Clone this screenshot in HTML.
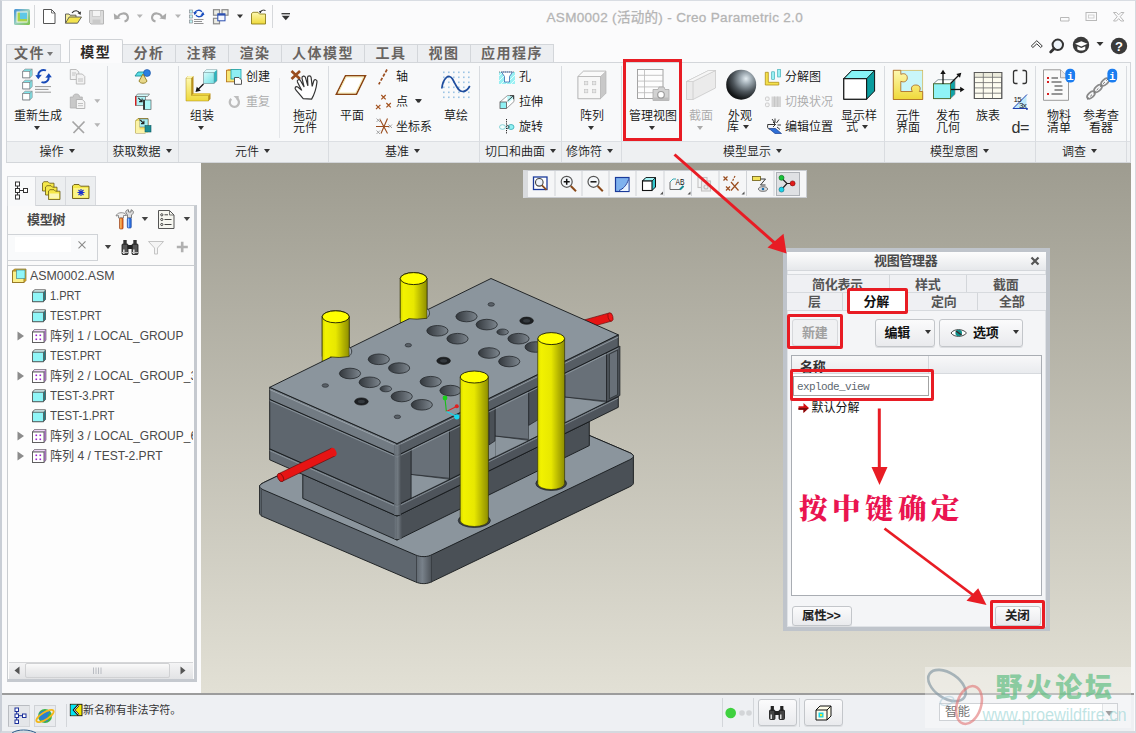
<!DOCTYPE html>
<html lang="zh-CN">
<head>
<meta charset="utf-8">
<title>ASM0002 (活动的) - Creo Parametric 2.0</title>
<style>
*{box-sizing:border-box;margin:0;padding:0}
html,body{width:1136px;height:733px;overflow:hidden;background:#fbfbfc}
body{position:relative;font-family:"Liberation Sans","Noto Sans CJK SC",sans-serif;font-size:12px;color:#222}
.abs{position:absolute}
#win{position:absolute;left:0;top:0;width:1136px;height:733px;background:#fbfbfc;border-left:2px solid #c9ced6;border-right:1.5px solid #d5d9df;border-bottom:2px solid #d5d9df;border-top:1px solid #d9dde3}
/* title */
#title{position:absolute;left:546.5px;top:6px;font-size:13.5px;color:#b2b2b2;white-space:nowrap;letter-spacing:0.32px;-webkit-text-stroke:.3px #b8b8b8}
/* tabs */
.tab{position:absolute;top:43.5px;height:19px;border:1px solid #d3d6da;border-bottom:none;background:#eceef1;color:#686461;font-weight:bold;font-size:14px;line-height:17px;text-align:center;letter-spacing:1.5px;white-space:nowrap}
.tab.act{top:39px;height:24px;background:#fbfbfc;color:#2e2a27;line-height:25px;z-index:3;border-color:#cfd2d6;border-radius:2px 2px 0 0}
#ribbon{position:absolute;left:6px;top:62px;width:1125px;height:101px;background:#f8f9fa;border:1px solid #d3d6da}
#rlabels{position:absolute;left:7px;top:140.5px;width:1123px;height:21.5px;background:#eef0f2;border-top:1px solid #dcdfe3}
.gsep{position:absolute;top:66px;width:1px;height:96px;background:#d9dce0}
.glab{position:absolute;top:144px;font-size:12px;color:#1a1a1a;white-space:nowrap;line-height:16px;font-weight:350}
.glab:after{content:"";display:inline-block;margin-left:5px;vertical-align:3px;border:3.5px solid transparent;border-top:4px solid #333;border-bottom:none}
.rl{position:absolute;font-size:12px;line-height:12px;color:#111;white-space:nowrap;font-weight:350;text-align:center}
.rl.dis{color:#aaa}
.dd{position:absolute;width:0;height:0;border:3.5px solid transparent;border-top:4px solid #333;border-bottom:none}
.dd.g{border-top-color:#aaa}
/* viewport */
#vp{position:absolute;left:201px;top:163px;width:930px;height:530px;background:linear-gradient(#9e9c90,#e2e0d5)}
/* left panel */
#lp{position:absolute;left:7px;top:205px;width:190px;height:477px;border:1px solid #cfd2d6;border-right:3px solid #c5c9cf;background:#fafafa}
.ptab{position:absolute;top:176px;width:30px;height:29px;border:1px solid #d8dade;border-bottom:none;background:#eceef0}
.ptab.act{background:#f8f9fa;height:30px;z-index:2}
#tree{position:absolute;left:7px;top:265px;width:190px;height:417px;border:1px solid #c9ccd0;border-right:3px solid #c5c9cf;border-bottom:3px solid #c5c9cf;background:#fdfdfd;overflow:hidden}
.ti{position:absolute;font-size:13px;color:#4a4a4a;white-space:nowrap;line-height:20px;height:20px;margin-top:.8px}
/* status */
#status{position:absolute;left:2px;top:693px;width:1132px;height:38px;background:#eef0f3;border-top:2px solid #9c9c9c}
</style>
</head>
<body>
<div id="win"></div>
<div id="title">ASM0002 (活动的) - Creo Parametric 2.0</div>

<!-- TABS -->
<div class="tab" style="left:6px;width:55px">文件<span style="display:inline-block;vertical-align:2px;margin-left:2px;border:3.5px solid transparent;border-top:4px solid #777;border-bottom:none"></span></div>
<div class="tab act" style="left:69px;width:53.5px">模型</div>
<div class="tab" style="left:122px;width:54px">分析</div>
<div class="tab" style="left:175px;width:54px">注释</div>
<div class="tab" style="left:228px;width:54px">渲染</div>
<div class="tab" style="left:281px;width:84px">人体模型</div>
<div class="tab" style="left:364px;width:54px">工具</div>
<div class="tab" style="left:417px;width:54px">视图</div>
<div class="tab" style="left:470px;width:84px">应用程序</div>

<div id="ribbon"></div>
<div id="rlabels"></div>
<!-- group separators -->
<div class="gsep" style="left:107px"></div><div class="gsep" style="left:178px"></div><div class="gsep" style="left:328px"></div><div class="gsep" style="left:479px"></div><div class="gsep" style="left:561px"></div><div class="gsep" style="left:621px"></div><div class="gsep" style="left:884px"></div><div class="gsep" style="left:1035px"></div><div class="gsep" style="left:1126px"></div>
<div class="abs" style="left:279px;top:78px;width:1px;height:60px;background:#e4e6e9"></div>
<!-- group labels -->
<div class="glab" style="left:39.5px">操作</div>
<div class="glab" style="left:112.5px">获取数据</div>
<div class="glab" style="left:235px">元件</div>
<div class="glab" style="left:385px">基准</div>
<div class="glab" style="left:485px">切口和曲面</div>
<div class="glab" style="left:566px">修饰符</div>
<div class="glab" style="left:723px">模型显示</div>
<div class="glab" style="left:930px">模型意图</div>
<div class="glab" style="left:1062px">调查</div>

<!-- big button labels -->
<div class="rl" style="left:14px;top:110px;width:48px">重新生成</div><div class="dd" style="left:34px;top:126px"></div>
<div class="rl" style="left:189px;top:110px;width:26px">组装</div><div class="dd" style="left:198px;top:126px"></div>
<div class="rl" style="left:246px;top:71px">创建</div>
<div class="rl dis" style="left:246px;top:96px">重复</div>
<div class="rl" style="left:292px;top:110px;width:26px">拖动<br>元件</div>
<div class="rl" style="left:339px;top:110px;width:26px">平面</div>
<div class="rl" style="left:396px;top:71px">轴</div>
<div class="rl" style="left:396px;top:96px">点</div><div class="dd" style="left:415px;top:99px"></div>
<div class="rl" style="left:396px;top:121px">坐标系</div>
<div class="rl" style="left:443px;top:110px;width:26px">草绘</div>
<div class="rl" style="left:519px;top:71px">孔</div>
<div class="rl" style="left:519px;top:96px">拉伸</div>
<div class="rl" style="left:519px;top:121px">旋转</div>
<div class="rl" style="left:579px;top:110px;width:26px">阵列</div><div class="dd" style="left:588px;top:126px"></div>
<div class="rl" style="left:628px;top:110px;width:50px">管理视图</div><div class="dd" style="left:649px;top:126px"></div>
<div class="rl dis" style="left:688px;top:110px;width:26px">截面</div><div class="dd g" style="left:697px;top:126px"></div>
<div class="rl" style="left:727px;top:110px;width:26px">外观</div><div class="rl" style="left:727px;top:121px">库</div><div class="dd" style="left:743px;top:125px"></div>
<div class="rl" style="left:785px;top:71px">分解图</div>
<div class="rl dis" style="left:785px;top:96px">切换状况</div>
<div class="rl" style="left:785px;top:121px">编辑位置</div>
<div class="rl" style="left:840px;top:110px;width:38px">显示样</div><div class="rl" style="left:846px;top:121px">式</div><div class="dd" style="left:862px;top:125px"></div>
<div class="rl" style="left:895px;top:110px;width:26px">元件<br>界面</div>
<div class="rl" style="left:935px;top:110px;width:26px">发布<br>几何</div>
<div class="rl" style="left:975px;top:110px;width:26px">族表</div>
<div class="rl" style="left:1046px;top:110px;width:26px">物料<br>清单</div>
<div class="rl" style="left:1082px;top:110px;width:38px">参考查<br>看器</div>

<!-- red highlight -->
<div class="abs" style="left:622.8px;top:58.8px;width:59.6px;height:82px;border:3px solid #e81c24;z-index:5"></div>
<svg class="abs" style="left:0;top:0;z-index:4" width="1136" height="165" viewBox="0 0 1136 165">
<defs>
<linearGradient id="gApp" x1="0" y1="0" x2="1" y2="1"><stop offset="0" stop-color="#3f8fd8"/><stop offset=".5" stop-color="#9ad0c0"/><stop offset="1" stop-color="#7cc142"/></linearGradient>
<linearGradient id="gFold" x1="0" y1="0" x2="0" y2="1"><stop offset="0" stop-color="#fdf8b0"/><stop offset="1" stop-color="#efd93a"/></linearGradient>
<linearGradient id="gCy" x1="0" y1="0" x2="1" y2="1"><stop offset="0" stop-color="#d8fbfb"/><stop offset="1" stop-color="#6fe3e6"/></linearGradient>
<radialGradient id="gSph" cx=".66" cy=".3" r=".8"><stop offset="0" stop-color="#e3ecf1"/><stop offset=".22" stop-color="#a3afb7"/><stop offset=".55" stop-color="#4d555b"/><stop offset=".85" stop-color="#15181a"/><stop offset="1" stop-color="#0a0b0c"/></radialGradient>
<g id="cube8"><path d="M0 2.2 L2.4 0 H9.5 V6.5 L7.1 8.7 H0Z" fill="#7fe6ea" stroke="#8a8f94" stroke-width=".7"/><rect x="0" y="2.2" width="7.1" height="6.5" fill="#fff" stroke="#7d8287" stroke-width=".8"/><path d="M7.1 2.2 L9.5 0" stroke="#7d8287" stroke-width=".6"/></g>
<g id="cubeS"><path d="M0 3 L3 0 H13 V9 L10 12 H0Z" fill="#35c9d0" stroke="#555" stroke-width=".8"/><rect x="0" y="3" width="10" height="9" fill="#b8f6f8" stroke="#555" stroke-width=".8"/><path d="M0 3 L3 0 H13 L10 3Z" fill="#8eeef1" stroke="#555" stroke-width=".6"/></g>
</defs>
<!-- quick access -->
<rect x="14" y="9" width="16" height="16" rx="1.5" fill="url(#gApp)"/>
<rect x="16.5" y="11.5" width="11" height="11" fill="#f4f7ee"/>
<rect x="20" y="12.5" width="7" height="6.5" fill="#5ec8e6"/>
<path d="M17.5 12.5 H20 V19 H27 V21.5 H17.5Z" fill="#a8d34a"/>
<rect x="34" y="5" width="1" height="23" fill="#d6d8db"/>
<path d="M43.5 9.5 H51.5 L55 13 V23.5 H43.5Z" fill="#fff" stroke="#555" stroke-width="1"/><path d="M51.5 9.5 V13 H55" fill="none" stroke="#555" stroke-width=".8"/>
<path d="M65.5 23.2 V14 H69 L70 15.2 H76 V17" fill="#f6ef9a" stroke="#555" stroke-width=".9"/><path d="M65.5 23.2 L69.2 17 H81.5 L77.5 23.2Z" fill="#f3e34f" stroke="#555" stroke-width=".9"/><path d="M72 12.8 C74.5 9.8 78.5 10 79.8 13.5" fill="none" stroke="#333" stroke-width="1.1"/><path d="M77.5 13 L80.6 15 L81 11.6Z" fill="#333"/>
<path d="M89.5 10.5 H103.5 V24 H91 L89.5 22.5Z" fill="#dcdcdc" stroke="#b6b6b6"/><rect x="92.5" y="10.5" width="8" height="6" fill="#f4f4f4" stroke="#bdbdbd" stroke-width=".6"/><rect x="92.5" y="19.5" width="8" height="4.5" fill="#c9c9c9"/>
<path d="M118 17 C119.5 12.8 126.5 12 127.8 16.5 C128.5 19 127.2 20.8 124.5 21.5" fill="none" stroke="#a9a9a9" stroke-width="2.2"/><path d="M113.8 13.2 L114.3 19.6 L120.6 18.4Z" fill="#a9a9a9"/>
<path d="M136.8 14.5 h6 l-3 3.6z" fill="#b5b5b5"/>
<path d="M162 17 C160.500 12.800 153.500 12 152.200 16.500 C151.500 19 152.800 20.800 155.500 21.500" fill="none" stroke="#a9a9a9" stroke-width="2.2"/><path d="M166.200 13.200 L165.700 19.600 L159.400 18.400Z" fill="#a9a9a9"/>
<path d="M175 14.5 h6 l-3 3.600z" fill="#b5b5b5"/>
<g fill="#bff3f5" stroke="#8a8f94" stroke-width=".7"><rect x="189.500" y="10" width="3" height="3"/><rect x="189.500" y="15" width="3" height="3"/><rect x="189.500" y="20" width="3" height="3"/></g>
<path d="M194.500 13.500 C195.500 9.800 200.500 9.300 201.800 12" fill="none" stroke="#1a4fc0" stroke-width="1.400"/><path d="M193.300 12 l3.800 .3 l-2.400 3z" fill="#1a4fc0"/><path d="M203.300 13.500 C202.300 17.200 197.300 17.700 196 15" fill="none" stroke="#1a4fc0" stroke-width="1.400"/><path d="M204.500 15 l-3.800 -.3 l2.400 -3z" fill="#1a4fc0"/>
<path d="M194 19.500 h9.500 M194 21.500 h8 M194 23.500 h9.500" stroke="#777" stroke-width=".8"/>
<g fill="#ecece4" stroke="#8b8b8b" stroke-width="1.200"><rect x="213.500" y="9.700" width="6" height="5.500"/><rect x="222" y="9.700" width="6" height="5.500"/><rect x="213.500" y="18.300" width="6" height="5.500"/></g><rect x="217.800" y="13.800" width="7.200" height="7" fill="#f7f9ff" stroke="#2c4fb0" stroke-width="1"/><rect x="217.800" y="13.800" width="7.200" height="1.800" fill="#2c4fb0"/>
<path d="M237 14.500 h6 l-3 3.800z" fill="#333"/>
<path d="M251.500 24 V13.500 L253 12.300 H258 L259.500 14 H265.500 V24Z" fill="url(#gFold)" stroke="#8d7f1d" stroke-width=".9"/><path d="M260 13 C260.500 10.500 263 9.500 265.500 10.500" fill="none" stroke="#333" stroke-width="1"/><path d="M258.800 11.300 l3 -.8 l-1.200 2.800z" fill="#333"/>
<rect x="272" y="5" width="1" height="23" fill="#d6d8db"/>
<path d="M281.500 13.700 h8.500" stroke="#333" stroke-width="1.300"/><path d="M281.800 15.700 h8 l-4 4.500z" fill="#333"/>
<!-- window buttons -->
<path d="M1060.500 17.500 h8.500 v3.500 h-8.500z" fill="#fbfbfc" stroke="#b9b9b9" stroke-width="1"/>
<rect x="1086" y="12.500" width="10.500" height="8" fill="none" stroke="#b9b9b9" stroke-width="1"/><rect x="1088.500" y="15" width="5.500" height="3" fill="none" stroke="#c9c9c9" stroke-width=".8"/>
<path d="M1113.500 12.500 h3 l2.200 2.300 l2.200 -2.300 h3 l-3.700 4.200 l3.700 4.300 h-3 l-2.200 -2.400 l-2.200 2.400 h-3 l3.700 -4.300z" fill="#fbfbfc" stroke="#b9b9b9" stroke-width="1"/>
<!-- top right icons -->
<path d="M1031.300 46 l5.500 -5.300 l5.500 5.300 l-1.600 1.500 l-3.900 -3.700 l-3.900 3.700z" fill="#fff" stroke="#333" stroke-width="1"/>
<circle cx="1057.800" cy="44.800" r="5.200" fill="#eef4fa" stroke="#333" stroke-width="2"/><path d="M1054 48.800 l-3.300 3.300" stroke="#333" stroke-width="2.800" stroke-linecap="round"/>
<circle cx="1081" cy="45" r="8.200" fill="#3a3a3a"/><path d="M1075 43.800 l6.300 -2.600 l6.300 2.600 l-6.300 2.600z" fill="#fff"/><path d="M1077.300 46.300 v3 c1.500 1.600 6.500 1.600 8 0 v-3 l-4 1.700z" fill="#fff"/>
<path d="M1096.500 42 h7 l-3.500 4z" fill="#333"/>
<circle cx="1119" cy="46" r="8.200" fill="#3a3a3a"/><text x="1119" y="51" font-size="13" font-weight="bold" fill="#fff" text-anchor="middle" font-family="Liberation Sans, sans-serif">?</text>

<!-- REGENERATE -->
<use href="#cube8" x="22.700" y="69.100"/><use href="#cube8" x="22.700" y="80.200"/><use href="#cube8" x="22.700" y="91.200"/>
<path d="M38.500 76 C37.500 71.500 42 68.800 46 70.500" fill="none" stroke="#1548b8" stroke-width="1.900"/><path d="M35.300 75.300 l6.500 -.6 l-3.500 4.500z" fill="#1548b8"/>
<path d="M48.500 76.500 C49.500 81 45 83.700 41.500 82" fill="none" stroke="#1548b8" stroke-width="1.900"/><path d="M51.800 77.200 l-6.500 .6 l3.500 -4.500z" fill="#1548b8"/>
<path d="M35 86.600 h16 M35 89.400 h13.500 M35 92.200 h16" stroke="#8c8c8c" stroke-width=".9"/>
<!-- copy / paste / delete (disabled) -->
<g fill="#f2f2f2" stroke="#b5b5b5" stroke-width=".9"><path d="M70.300 69.500 h6 l2.500 2.500 v7.500 h-8.500z"/><path d="M76.300 74 h6 l2.500 2.500 v7.500 h-8.500z"/></g><path d="M72 73 h4 M72 75 h3 M78 79 h5 M78 81 h5" stroke="#b5b5b5" stroke-width=".8"/>
<path d="M70.300 97 h3 v-1.500 c1 -2 5 -2 6 0 v1.500 h3 v11 h-12z" fill="#c9c9c9" stroke="#b0b0b0" stroke-width=".8"/><path d="M76.300 99.500 h6 l2.500 2.500 v6.500 h-8.500z" fill="#f5f5f5" stroke="#b0b0b0" stroke-width=".9"/><path d="M78 103.500 h5 M78 105.700 h5" stroke="#b5b5b5" stroke-width=".8"/>
<path d="M94.300 99.300 h6 l-3 3.700z" fill="#b5b5b5"/>
<path d="M72.500 121.500 l11.500 11.500 M84.500 121.500 l-11 11.500" stroke="#a5a5a5" stroke-width="1.700"/>
<path d="M94.300 123.300 h6 l-3 3.700z" fill="#b5b5b5"/>
<!-- get data -->
<path d="M135 76 l3 -4 h9 l-3 4z" fill="#59dfe6" stroke="#1d8f9a" stroke-width=".9"/><circle cx="147" cy="73" r="3.500" fill="#2b7fe0" stroke="#1c4fa0" stroke-width=".6"/><path d="M143 74 l4 7 c-1 3 -7 3 -8 0z" fill="#e8d88a" stroke="#8f7a1d" stroke-width=".9"/>
<path d="M135.500 96.500 l2 -2.500 h12 l-2 2.500z" fill="#d5f9fa" stroke="#555" stroke-width=".6"/><rect x="135.500" y="96.500" width="10" height="9" fill="#aef3f6" stroke="#555" stroke-width=".6"/><rect x="135" y="96.500" width="1.500" height="9" fill="#d21f1f"/><rect x="143.500" y="100" width="7.500" height="9.500" fill="#aef8fa" stroke="#444" stroke-width=".6"/><rect x="143.300" y="100" width="1.600" height="9.500" fill="#222"/><path d="M138.300 97.800 l3.800 3.800 m0 -3 v3 h-3" stroke="#222" stroke-width="1.100" fill="none"/>
<path d="M135.500 121 l2.500 -2.500 h10 v12 l-2.500 2.500 h-10z" fill="#f3e26a" stroke="#8f7a1d" stroke-width=".8"/><rect x="139.500" y="119" width="8.500" height="8" fill="#a8f0f3" stroke="#555" stroke-width=".5"/><path d="M135.500 121 h4 v8.500 h8.500 v3.500 h-12.500z" fill="#fbf3a8"/><rect x="145" y="125.500" width="6" height="6.500" fill="#1c8c95" stroke="#0f5c63" stroke-width=".6"/><path d="M140.300 120 l3.600 3.600 m0 -2.900 v2.900 h-2.900" stroke="#222" stroke-width="1.100" fill="none"/>
<!-- ASSEMBLE -->
<path d="M186 78 l2 -2 h5.500 v17.500 h17 v5.500 l-2 2 h-22.500z" fill="#b98f1a"/><path d="M186 78 h5.500 v17.500 h17 v5.500 h-22.500z" fill="url(#gFold)" stroke="#a88a1a" stroke-width=".5"/><path d="M186 78 l2 -2 h5.500 l-2 2z" fill="#fbf6b5"/><path d="M191.500 95.500 l2 -2 h17 l-2 2z" fill="#e9cf3a"/>
<path d="M203.500 72.500 l3 -2.800 h10.500 v11 l-3 2.800 h-10.500z" fill="#27b7c0" stroke="#8a8f94" stroke-width=".6"/><path d="M203.500 72.500 l3 -2.800 h10.500 l-3 2.800z" fill="#d9fbfc"/><rect x="203.500" y="72.500" width="10.500" height="11" fill="url(#gCy)" stroke="#8a8f94" stroke-width=".5"/>
<path d="M203.500 84 l-6 6" stroke="#111" stroke-width="1.200"/><path d="M195.500 92 l1.300 -5.300 l4 4z" fill="#111"/>
<!-- create -->
<rect x="226.500" y="70.300" width="11" height="11.500" fill="#f7e673" stroke="#b77a1d" stroke-width=".9"/><path d="M226.500 70.300 l1.800 -1.300 h11 l-1.800 1.300z" fill="#e9a050"/><rect x="231" y="69.500" width="10" height="9.500" fill="#8eeef2" stroke="#18a3ad" stroke-width=".8"/><path d="M234.500 77.500 h4.500 l2.500 2.500 v4.300 h-7z" fill="#fff" stroke="#444" stroke-width=".9"/>
<!-- repeat -->
<path d="M231.300 98.800 A4.600 4.600 0 1 0 237 98.500" fill="none" stroke="#bdbdbd" stroke-width="2.300"/><path d="M233.500 96 h5.200 v5.200z" fill="#bdbdbd"/>
<!-- drag -->
<path d="M291.500 71 l8.500 8 M300 71 l-8.500 8" stroke="#9a4d1f" stroke-width="2.600"/>
<g transform="translate(296 76) scale(1.2) translate(-296.5 -76.3)"><path d="M296.500 88 c-1.500 -1.500 -.5 -3.500 1.500 -2.500 l3.300 2.800 l-3.600 -7 c-.7 -1.800 1.700 -2.800 2.600 -1.100 l3 5.300 l-1.800 -7.300 c-.3 -1.900 2.300 -2.500 2.900 -.6 l2 6.800 l-.3 -6.800 c.1 -1.900 2.800 -1.900 3 0 l.9 7.300 l1.300 -4.500 c.6 -1.700 2.900 -1.100 2.700 .7 c-.5 4.500 -1.500 9.500 -4.500 14.500 l-7 -.5 c-2 -2.200 -3.500 -4.300 -6 -7.100z" fill="#fff" stroke="#333" stroke-width="1"/></g>
<!-- plane -->
<path d="M345.500 75.700 H365.500 L356.500 94.200 H336.300Z" fill="#fff" stroke="#8a4513" stroke-width="1.500"/><path d="M346.200 77 H363.500 L355.700 93 H338.300Z" fill="none" stroke="#f0e39a" stroke-width=".8"/>
<!-- axis -->
<path d="M387 69.500 L378.800 84.300" stroke="#9a4d1f" stroke-width="1.700" stroke-dasharray="3.200 1.600"/>
<!-- points -->
<g stroke="#a3521f" stroke-width="1.200"><path d="M381.300 95 l4.400 4.400 m0 -4.400 l-4.400 4.400"/><path d="M376 104.800 l4.400 4.400 m0 -4.400 l-4.400 4.400"/><path d="M386.400 103 l4.400 4.400 m0 -4.400 l-4.400 4.400"/></g>
<path d="M416 99.300 h6 l-3 3.700z" fill="#333"/>
<!-- csys -->
<g stroke="#8f8f8f" stroke-width=".8"><path d="M376.500 118.500 l3.500 3.500 m0 -3.500 l-3.500 3.500 M388.500 124.500 l3.500 3.500 m0 -3.500 l-3.500 3.500 M376.500 130.500 l3.500 3.500 m0 -3.500 l-3.500 3.500"/></g>
<path d="M376 126.500 h13 M380 119.500 l7.500 14 M387.500 118.500 l-6.500 15" stroke="#9a4d1f" stroke-width="1.100"/>
<!-- sketch -->
<g fill="#9cc4e4"><g id="dr"><rect x="443" y="71.500" width="1.600" height="1.600"/><rect x="448" y="71.500" width="1.600" height="1.600"/><rect x="453" y="71.500" width="1.600" height="1.600"/><rect x="458" y="71.500" width="1.600" height="1.600"/><rect x="463" y="71.500" width="1.600" height="1.600"/><rect x="468" y="71.500" width="1.600" height="1.600"/></g><use href="#dr" y="5"/><use href="#dr" y="10"/><use href="#dr" y="15"/><use href="#dr" y="20"/><use href="#dr" y="25"/></g>
<path d="M441.800 88.500 C443 78 449 73 452.500 79 C456 85 458 92 463 91.500 C466.500 91.200 468.500 88.500 469.800 86" fill="none" stroke="#1f4d9e" stroke-width="1.700"/>
<!-- hole -->
<rect x="499" y="72" width="16" height="12" fill="#9af0f3"/><path d="M499 76 l4 -4 M499 81 l9 -9 M501 84 l12 -12 M506 84 l9 -9 M511 84 l4 -4" stroke="#e4fcfd" stroke-width="1"/><path d="M501.500 72 h11 l-3 4.500 v5.500 h-5 v-5.500z" fill="#fff" stroke="#2056a8" stroke-width=".7"/><path d="M499 72 h16" stroke="#555" stroke-width=".7" stroke-dasharray="1 1"/>
<!-- extrude -->
<path d="M500 102 l7.500 -6.500 h6.500 v6 l-7.500 7" fill="#fff" stroke="#777" stroke-width=".7"/><path d="M507 96 h7 v1.500 l-6 5.500z" fill="#b8f6f8"/><rect x="500" y="102" width="6.500" height="6.500" fill="#8ff1f4" stroke="#555" stroke-width=".8"/><path d="M507.500 101 l6 -5.300 m-3.500 0 h3.500 v3.500" stroke="#333" stroke-width=".9" fill="none"/>
<!-- revolve -->
<ellipse cx="502.500" cy="127" rx="3" ry="2.300" fill="#f2ffff" stroke="#6ac6cc" stroke-width=".8"/><ellipse cx="511" cy="127" rx="3" ry="2.500" fill="#8ff1f4" stroke="#35a9b2" stroke-width=".8"/><path d="M506.500 119 v15" stroke="#222" stroke-width="1" stroke-dasharray="1.200 1"/><path d="M507 125 l2.500 2 l-2.500 2" fill="none" stroke="#333" stroke-width=".8"/>
<!-- pattern -->
<path d="M578 76.500 l5.500 -5.300 h22.500 v22 l-5.500 5.500 h-22.500z" fill="#c8c8c8" stroke="#b5b5b5" stroke-width=".7"/><path d="M578 76.500 l5.500 -5.300 h22.500 l-5.500 5.300z" fill="#fafafa" stroke="#b5b5b5" stroke-width=".6"/><rect x="578" y="76.500" width="22.500" height="22.200" fill="#f7f7f7" stroke="#b5b5b5" stroke-width=".8"/><g fill="#e6e6e6" stroke="#c2c2c2" stroke-width=".6"><rect x="584.500" y="81.500" width="3.300" height="3.300"/><rect x="592.500" y="81.500" width="3.300" height="3.300"/><rect x="584.500" y="89.500" width="3.300" height="3.300"/><rect x="592.500" y="89.500" width="3.300" height="3.300"/></g>
<!-- manage views -->
<rect x="637.500" y="69.500" width="25.500" height="29" fill="#fdfdfd" stroke="#9a9a9a" stroke-width=".9"/><path d="M637.500 75.300 h25.500 M637.500 81.100 h25.500 M637.500 86.900 h25.500 M637.500 92.700 h25.500 M644.500 69.500 v29" stroke="#b8b8b8" stroke-width=".8"/>
<path d="M653 89.500 h5 l1 -2.500 h5 l1 2.500 h4 v11 h-16z" fill="#d2d2d2" stroke="#a8a8a8" stroke-width=".8"/><rect x="653" y="97.500" width="16" height="3" fill="#bdbdbd"/><circle cx="661" cy="94.800" r="3.300" fill="#fff" stroke="#9d9d9d" stroke-width="1.200"/>
<!-- section -->
<path d="M686.500 81.500 l22 -11 h7 v17.500 l-22.500 11.500 h-6.500z" fill="#ebebeb" stroke="#c9c9c9" stroke-width=".8"/><path d="M686.500 81.500 h6.500 v18 M693 81.500 l22.500 -11" fill="none" stroke="#c9c9c9" stroke-width=".8"/><path d="M686.500 81.500 l22 -11 h7 l-22.500 11z" fill="#f6f6f6" stroke="#c9c9c9" stroke-width=".6"/>
<!-- sphere -->
<circle cx="741.200" cy="84.700" r="15" fill="url(#gSph)"/>
<!-- explode -->
<path d="M765.300 72.300 h3 v10 h10.500 v2.700 h-13.500z" fill="#f4e14c" stroke="#b3901a" stroke-width=".8"/><rect x="771.700" y="71.800" width="2.800" height="7.500" fill="#9af0f3" stroke="#2da5ae" stroke-width=".6"/><rect x="777.700" y="69.500" width="2.800" height="7.500" fill="#9af0f3" stroke="#2da5ae" stroke-width=".6"/>
<!-- toggle status -->
<rect x="765.500" y="97" width="3.600" height="3.600" rx="1" fill="#f4f4f4" stroke="#c4c4c4" stroke-width=".8"/><rect x="765.500" y="103" width="3.600" height="3.600" rx="1" fill="#f4f4f4" stroke="#c4c4c4" stroke-width=".8"/><rect x="771.500" y="96.500" width="9.500" height="10.500" fill="#d5d5d5"/><path d="M774.500 96.500 v10.500 M777.700 96.500 v10.500" stroke="#c2c2c2" stroke-width=".8"/>
<!-- edit position -->
<path d="M769 128.500 l6 5 h6.500 l-6 -5z" fill="#2f6fd6" stroke="#1a3f90" stroke-width=".7"/><path d="M767.500 124.500 h8 m-2.500 -2.500 l2.500 2.500 l-2.500 2.500 M772 119 l3 4 M775 118.500 v4 M779 119.500 l-2.500 3.500 M777.500 125 h3.500 M777 127 l3 2.500" stroke="#222" stroke-width=".9" fill="none"/><path d="M768 124.500 c-1 2 -.5 4 1.500 5" stroke="#222" stroke-width=".9" fill="none"/>
<!-- display style -->
<path d="M843.800 78.700 l8 -8.200 h22.800 v20.500 l-8 8.200 h-22.800z" fill="#0a9c9e" stroke="#111" stroke-width="1"/><path d="M843.800 78.700 l8 -8.200 h22.800 l-8 8.200z" fill="#86f3f5" stroke="#111" stroke-width=".9"/><rect x="843.800" y="78.700" width="22.800" height="20.500" fill="#fff" stroke="#111" stroke-width="1.100"/>
<!-- component interface -->
<rect x="893.300" y="70.300" width="29.400" height="29.200" fill="#c9f6f9" stroke="#d1b24a" stroke-width=".7"/>
<path d="M893.300 70.300 h7.500 v4 c3.500 -1.500 6.500 0 6.500 3.500 c0 3.500 -3 5 -6.500 3.500 v10.200 h11.500 c-2 -3.500 -.5 -6.500 3.500 -6.500 c4 0 5.500 3 3.500 6.500 h3.400 v8 h-29.400z" fill="url(#gFold)" stroke="#a8621d" stroke-width=".8"/>
<!-- publish geometry -->
<path d="M933.500 83.800 l4.500 -4 h17 v14.500 l-4.500 4.300 h-17z" fill="#0fa4a8" stroke="#7d8287" stroke-width=".7"/><path d="M933.500 83.800 l4.500 -4 h17 l-4.500 4z" fill="#fff" stroke="#7d8287" stroke-width=".6"/><rect x="933.500" y="83.800" width="17" height="14.800" fill="#8ff3f6" stroke="#4d6a2a" stroke-width=".9"/>
<g stroke="#111" stroke-width="1.300" fill="#111"><path d="M943 84 v-11"/><path d="M940.300 74 l2.700 -4.300 l2.700 4.300z" stroke="none"/><path d="M950.500 83.500 l8.500 -8.500"/><path d="M961.300 72.700 l-1.300 5 l-3.700 -3.700z" stroke="none"/><path d="M951 89.500 h10"/><path d="M964.500 89.500 l-4.300 2.700 v-5.400z" stroke="none"/></g>
<!-- family table -->
<rect x="974.300" y="72.500" width="27.500" height="26" fill="#fdfcf0" stroke="#555" stroke-width=".9"/><rect x="974.300" y="72.500" width="27.500" height="4.500" fill="#ecebdc"/><path d="M974.300 77.300 h27.500 M974.300 82.600 h27.500 M974.300 87.900 h27.500 M974.300 93.200 h27.500 M983.300 72.500 v26 M992.500 72.500 v26" stroke="#6a6a6a" stroke-width=".8"/><rect x="974.300" y="72.500" width="27.500" height="26" fill="none" stroke="#555" stroke-width=".9"/>
<!-- () -->
<path d="M1017.500 70.500 h-2 c-1.500 0 -2 .8 -2 2 v9 c0 1.200 .5 2 2 2 h2 M1022.500 70.500 h2 c1.500 0 2 .8 2 2 v9 c0 1.200 -.5 2 -2 2 h-2" fill="none" stroke="#333" stroke-width="1.300"/>
<!-- 15/3x -->
<path d="M1013 108.500 l13.500 -13.500 v13.500z" fill="#bfe9fb"/><path d="M1013 108.500 h13.800 M1013 108.500 l14 -14" stroke="#1f3fae" stroke-width="1"/><rect x="1026" y="108" width="1.800" height="1.800" fill="#1f3fae"/>
<text x="1013.500" y="102" font-size="8" font-family="Liberation Sans, sans-serif" fill="#222" letter-spacing="-.6">15</text><text x="1019" y="108.300" font-size="8" font-family="Liberation Sans, sans-serif" fill="#222" letter-spacing="-.6">3x</text>
<!-- d= -->
<text x="1011.500" y="132.500" font-size="17" font-family="Liberation Sans, sans-serif" fill="#333" letter-spacing="-.5" textLength="17.500" lengthAdjust="spacingAndGlyphs">d=</text>
<!-- BOM -->
<path d="M1043.500 69.800 h17 l8 8 v22.500 h-25z" fill="#fafafa" stroke="#8f8f8f" stroke-width=".9"/><path d="M1060.500 69.800 v8 h8" fill="#e9e9e9" stroke="#8f8f8f" stroke-width=".8"/>
<g fill="#d81f1f"><rect x="1047" y="77" width="2" height="2"/><rect x="1047" y="81" width="2" height="2"/><rect x="1047" y="93" width="2" height="2"/></g><path d="M1051.500 78 h6.500 M1051.500 82 h10 M1054.500 86 h8 M1054.500 90 h8 M1051.500 94 h11" stroke="#333" stroke-width="1"/>
<rect x="1065.300" y="68.800" width="9.800" height="13.700" rx="4.500" fill="#1b7df0"/><text x="1070.200" y="80" font-size="11" font-weight="bold" font-family="Liberation Mono, monospace" fill="#fff" text-anchor="middle">i</text>
<!-- chain -->
<g fill="none" stroke="#8a8a8a" stroke-width="1.800"><ellipse cx="1091" cy="95" rx="4.600" ry="2.600" transform="rotate(-42 1091 95)"/><ellipse cx="1098" cy="88.500" rx="4.600" ry="2.600" transform="rotate(-42 1098 88.500)"/><ellipse cx="1105" cy="82" rx="4.600" ry="2.600" transform="rotate(-42 1105 82)"/></g><path d="M1087 99.500 l21 -20.500" stroke="#6f6f6f" stroke-width="1" stroke-dasharray="2.500 2"/>
<rect x="1107.400" y="68.800" width="9.800" height="13.700" rx="4.500" fill="#1b7df0"/><text x="1112.300" y="80" font-size="11" font-weight="bold" font-family="Liberation Mono, monospace" fill="#fff" text-anchor="middle">i</text>

</svg>


<div id="vp"></div>
<svg class="abs" style="left:201px;top:163px" width="930" height="530" viewBox="201 163 930 530">
<defs>
<linearGradient id="gY" x1="0" x2="1"><stop offset="0" stop-color="#d8d800"/><stop offset=".12" stop-color="#f2f200"/><stop offset=".5" stop-color="#e8e800"/><stop offset=".78" stop-color="#b4b400"/><stop offset="1" stop-color="#8e8e00"/></linearGradient>
<linearGradient id="gH" x1="0" x2="1"><stop offset="0" stop-color="#33383d"/><stop offset=".55" stop-color="#5a6168"/><stop offset="1" stop-color="#7d868e"/></linearGradient>
<linearGradient id="gCor" x1="0" x2="1"><stop offset="0" stop-color="#5e666e"/><stop offset=".45" stop-color="#7f8890"/><stop offset="1" stop-color="#4a5056"/></linearGradient>
</defs>
<linearGradient id="gBase" gradientUnits="userSpaceOnUse" x1="415.9" x2="432.1" y1="0" y2="0"><stop offset="0" stop-color="#5e666e"/><stop offset=".4" stop-color="#78818a"/><stop offset="1" stop-color="#4a5056"/></linearGradient><path d="M259.6 486.0 L260.0 485.2 L260.8 484.3 L262.0 483.5 L263.6 482.6 L460.9 387.9 L462.7 387.1 L464.5 386.5 L466.3 386.1 L468.1 385.9 L469.9 385.9 L471.8 386.0 L473.6 386.3 L475.4 386.8 L477.3 387.5 L629.2 452.5 L630.9 453.2 L632.1 454.1 L632.9 454.9 L633.3 455.7 L633.4 456.5 L633.4 483.5 L633.0 484.3 L632.2 485.2 L631.0 486.0 L629.4 486.9 L432.1 581.6 L430.3 582.4 L428.5 583.0 L426.7 583.4 L424.9 583.6 L423.1 583.6 L421.2 583.5 L419.4 583.2 L417.6 582.7 L415.7 582.0 L263.8 517.0 L262.1 516.2 L260.9 515.5 L260.1 514.6 L259.7 513.8 L259.6 513.0Z" fill="url(#gBase)" stroke="#15181b" stroke-width="0.9" stroke-linejoin="round" /><path d="M263.6 482.6 L262.0 483.5 L260.8 484.3 L260.0 485.2 L259.6 486.0 L259.7 486.8 L260.1 487.6 L260.9 488.4 L262.1 489.2 L263.8 490.0 L415.7 555.0 L417.6 555.7 L419.4 556.2 L421.2 556.5 L423.0 556.6 L424.9 556.6 L426.7 556.4 L428.5 556.0 L430.3 555.4 L432.1 554.6 L629.4 459.9 L631.0 459.0 L632.2 458.2 L633.0 457.3 L633.4 456.5 L633.3 455.7 L632.9 454.9 L632.1 454.1 L630.9 453.3 L629.2 452.5 L477.3 387.5 L475.4 386.8 L473.6 386.3 L471.8 386.0 L470.0 385.9 L468.1 385.9 L466.3 386.1 L464.5 386.5 L462.7 387.1 L460.9 387.9Z" fill="#8b959d" stroke="#15181b" stroke-width="0.9" stroke-linejoin="round" />
<path d="M416.5 556.0 L416.5 583.0" fill="none" stroke="#30353a" stroke-width="0.7"/>
<path d="M431.5 555.5 L431.5 582.5" fill="none" stroke="#30353a" stroke-width="0.7"/>
<path d="M261.5 490.0 L261.5 516.5" fill="none" stroke="#30353a" stroke-width="0.6"/>
<path d="M302.8 474.4 L302.8 498.4 L397.0 540.1 L397.0 516.1Z" fill="#5e666e" stroke="#15181b" stroke-width="0.9" stroke-linejoin="round" />
<path d="M397.0 516.1 L397.0 540.1 L589.3 445.6 L589.3 421.6Z" fill="#4a5056" stroke="#15181b" stroke-width="0.9" stroke-linejoin="round" />
<path d="M394.0 516.1 V539.1 H402.0 V516.1 Z" fill="url(#gCor)" opacity=".8"/>
<path d="M269.7 448.8 L269.7 459.8 L397.0 516.1 L397.0 505.1Z" fill="#636b73" stroke="#15181b" stroke-width="0.9" stroke-linejoin="round" />
<path d="M397.0 505.1 L397.0 516.1 L618.3 407.3 L618.3 396.3Z" fill="#4e545b" stroke="#15181b" stroke-width="0.9" stroke-linejoin="round" />
<path d="M269.7 399.3 L269.7 448.8 L397.0 505.1 L397.0 455.6Z" fill="#5e666e" stroke="#15181b" stroke-width="0.9" stroke-linejoin="round" />
<path d="M397.0 455.6 L397.0 505.1 L618.3 396.3 L618.3 346.8Z" fill="#6d757d" stroke="#15181b" stroke-width="0.9" stroke-linejoin="round" />
<path d="M411.0 474.4 L449.5 479.3 L411.0 498.2Z" fill="#8b959d" stroke="#15181b" stroke-width="0.5" stroke-linejoin="round" />
<path d="M411.0 448.7 L449.5 429.8 L449.5 478.3 L411.0 474.4Z" fill="#687078" stroke="#15181b" stroke-width="0.6" stroke-linejoin="round" />
<path d="M449.5 429.8 L461.0 424.1 L461.0 473.6 L449.5 479.3Z" fill="#4a5056" stroke="#15181b" stroke-width="0.5" stroke-linejoin="round" />
<path d="M495.0 436.0 L528.7 440.4 L495.0 456.9Z" fill="#8b959d" stroke="#15181b" stroke-width="0.5" stroke-linejoin="round" />
<path d="M495.0 407.4 L528.7 390.9 L528.7 439.4 L495.0 436.0Z" fill="#687078" stroke="#15181b" stroke-width="0.6" stroke-linejoin="round" />
<path d="M528.7 390.9 L538.0 386.3 L538.0 435.8 L528.7 440.4Z" fill="#4a5056" stroke="#15181b" stroke-width="0.5" stroke-linejoin="round" />
<path d="M565.0 397.0 L606.5 402.1 L565.0 422.5Z" fill="#8b959d" stroke="#15181b" stroke-width="0.5" stroke-linejoin="round" />
<path d="M565.0 373.0 L606.5 352.6 L606.5 401.1 L565.0 397.0Z" fill="#687078" stroke="#15181b" stroke-width="0.6" stroke-linejoin="round" />
<path d="M397.0 455.6 L397.0 505.1 L411.0 498.2 L411.0 448.7Z" fill="#4a5056" stroke="#15181b" stroke-width="0.6" stroke-linejoin="round" />
<path d="M606.5 352.6 L606.5 402.1 L620.0 395.5 L620.0 346.0Z" fill="#4a5056" stroke="#15181b" stroke-width="0.6" stroke-linejoin="round" />
<path d="M489.0 410.4 L489.0 459.9 L495.0 456.9 L495.0 407.4Z" fill="#8b959d" stroke="#15181b" stroke-width="0" stroke-linejoin="round" />
<path d="M489.0 410.4 L489.0 444.9 L495.0 440.9 L495.0 407.4Z" fill="#4a5056" stroke="#15181b" stroke-width="0.6" stroke-linejoin="round" />
<path d="M489.0 459.9 L495.0 456.9" fill="none" stroke="#15181b" stroke-width="0.8"/>
<path d="M528.7 390.9 L528.7 440.4 L538.0 435.8 L538.0 386.3Z" fill="#8b959d" stroke="#15181b" stroke-width="0" stroke-linejoin="round" />
<path d="M528.7 390.9 L528.7 425.4 L538.0 419.8 L538.0 386.3Z" fill="#4a5056" stroke="#15181b" stroke-width="0.6" stroke-linejoin="round" />
<path d="M528.7 440.4 L538.0 435.8" fill="none" stroke="#15181b" stroke-width="0.8"/>
<path d="M609.5 354.1 L609.5 398.6 L617.5 394.7 L617.5 350.2Z" fill="#687078" stroke="#15181b" stroke-width="0.5" stroke-linejoin="round" />
<path d="M583.1 329.1 L611.6 321.1 L609.4 312.9 L580.9 320.9Z" fill="#e61414" stroke="#6a0c0c" stroke-width="0.7" stroke-linejoin="round" />
<path d="M322.2 316.8 V362.0 A13.5 6.0 0 0 0 349.2 362.0 V316.8 Z" fill="url(#gY)" stroke="#33330a" stroke-width=".7"/><ellipse cx="335.7" cy="316.8" rx="13.5" ry="6.0" fill="#ffff00" stroke="#1a1a05" stroke-width=".9"/>
<path d="M400.3 278.6 V324.0 A13.3 6.0 0 0 0 427.0 324.0 V278.6 Z" fill="url(#gY)" stroke="#33330a" stroke-width=".7"/><ellipse cx="413.6" cy="278.6" rx="13.3" ry="6.0" fill="#ffff00" stroke="#1a1a05" stroke-width=".9"/>
<path d="M269.7 387.3 L269.7 399.3 L397.0 455.6 L397.0 443.6Z" fill="#727b83" stroke="#15181b" stroke-width="0.9" stroke-linejoin="round" />
<path d="M397.0 443.6 L397.0 455.6 L618.3 346.8 L618.3 334.8Z" fill="#565d64" stroke="#15181b" stroke-width="0.9" stroke-linejoin="round" />
<path d="M269.7 387.3 L491.0 278.5 L618.3 334.8 L397.0 443.6Z" fill="#8b959d" stroke="#15181b" stroke-width="0.9" stroke-linejoin="round" />
<path d="M269.7 389.5 L397.0 445.8 L618.3 337.0" fill="none" stroke="#aab3ba" stroke-width="0.7"/>
<path d="M269.7 400.8 L397.0 457.1 L618.3 348.3" fill="none" stroke="#9aa3aa" stroke-width="0.7"/>
<path d="M269.7 450.6 L397.0 506.9 L618.3 398.1" fill="none" stroke="#9aa3aa" stroke-width="0.7"/>
<path d="M394.0 444.6 V515.1 H401.0 V444.6 Z" fill="url(#gCor)" opacity=".85"/>
<ellipse cx="466.5" cy="316.5" rx="10.6" ry="5.3" fill="url(#gH)" stroke="#23272b" stroke-width=".8"/>
<ellipse cx="486.7" cy="324.6" rx="10.6" ry="5.3" fill="url(#gH)" stroke="#23272b" stroke-width=".8"/>
<ellipse cx="437.4" cy="330.8" rx="10.6" ry="5.3" fill="url(#gH)" stroke="#23272b" stroke-width=".8"/>
<ellipse cx="457.5" cy="338.7" rx="10.6" ry="5.3" fill="url(#gH)" stroke="#23272b" stroke-width=".8"/>
<ellipse cx="518.5" cy="338.7" rx="10.6" ry="5.3" fill="url(#gH)" stroke="#23272b" stroke-width=".8"/>
<ellipse cx="535.6" cy="347.0" rx="10.6" ry="5.3" fill="url(#gH)" stroke="#23272b" stroke-width=".8"/>
<ellipse cx="489.0" cy="353.0" rx="10.6" ry="5.3" fill="url(#gH)" stroke="#23272b" stroke-width=".8"/>
<ellipse cx="509.2" cy="361.5" rx="10.6" ry="5.3" fill="url(#gH)" stroke="#23272b" stroke-width=".8"/>
<ellipse cx="378.8" cy="359.3" rx="10.6" ry="5.3" fill="url(#gH)" stroke="#23272b" stroke-width=".8"/>
<ellipse cx="399.1" cy="368.1" rx="10.6" ry="5.3" fill="url(#gH)" stroke="#23272b" stroke-width=".8"/>
<ellipse cx="350.0" cy="373.5" rx="10.6" ry="5.3" fill="url(#gH)" stroke="#23272b" stroke-width=".8"/>
<ellipse cx="369.7" cy="382.3" rx="10.6" ry="5.3" fill="url(#gH)" stroke="#23272b" stroke-width=".8"/>
<ellipse cx="430.7" cy="381.7" rx="10.6" ry="5.3" fill="url(#gH)" stroke="#23272b" stroke-width=".8"/>
<ellipse cx="450.5" cy="390.6" rx="10.6" ry="5.3" fill="url(#gH)" stroke="#23272b" stroke-width=".8"/>
<ellipse cx="401.7" cy="396.5" rx="10.6" ry="5.3" fill="url(#gH)" stroke="#23272b" stroke-width=".8"/>
<ellipse cx="421.8" cy="404.8" rx="10.6" ry="5.3" fill="url(#gH)" stroke="#23272b" stroke-width=".8"/>
<ellipse cx="502.6" cy="332.0" rx="5.8" ry="3" fill="url(#gH)" stroke="#23272b" stroke-width=".7"/>
<ellipse cx="385.8" cy="388.8" rx="5.8" ry="3" fill="url(#gH)" stroke="#23272b" stroke-width=".7"/>
<ellipse cx="491.2" cy="304.4" rx="3.2" ry="1.8" fill="#5a6168" stroke="#23272b" stroke-width=".6"/>
<ellipse cx="408.3" cy="345.2" rx="3.2" ry="1.8" fill="#5a6168" stroke="#23272b" stroke-width=".6"/>
<ellipse cx="325.3" cy="385.5" rx="3.2" ry="1.8" fill="#5a6168" stroke="#23272b" stroke-width=".6"/>
<ellipse cx="397.4" cy="416.8" rx="3.2" ry="1.8" fill="#5a6168" stroke="#23272b" stroke-width=".6"/>
<ellipse cx="526.6" cy="320.7" rx="6.8" ry="3.6" fill="#1d2023" stroke="#111" stroke-width=".6"/><ellipse cx="526.6" cy="320.7" rx="3.5" ry="1.8" fill="#34393e"/>
<ellipse cx="443.6" cy="360.8" rx="6.8" ry="3.6" fill="#1d2023" stroke="#111" stroke-width=".6"/><ellipse cx="443.6" cy="360.8" rx="3.5" ry="1.8" fill="#34393e"/>
<ellipse cx="361.4" cy="401.5" rx="6.8" ry="3.6" fill="#1d2023" stroke="#111" stroke-width=".6"/><ellipse cx="361.4" cy="401.5" rx="3.5" ry="1.8" fill="#34393e"/>
<path d="M282.3 481.3 L335.3 455.8 L331.7 448.2 L278.7 473.7Z" fill="#e61414" stroke="#6a0c0c" stroke-width="0.7" stroke-linejoin="round" />
<ellipse cx="280.5" cy="477.5" rx="2.6" ry="4.4" transform="rotate(-26 280.5 477.5)" fill="#e61414" stroke="#6a0c0c" stroke-width=".7"/>
<ellipse cx="333.5" cy="452" rx="2.6" ry="4.4" transform="rotate(-26 333.5 452)" fill="#e61414"/>
<ellipse cx="610.5" cy="317" rx="2.4" ry="4.3" transform="rotate(-15 610.5 317)" fill="#f01818" stroke="#6a0c0c" stroke-width=".6"/>
<path d="M322.2 316.8 V356.6 Q335.7 358.1 349.2 356.6 V316.8 Z" fill="url(#gY)" stroke="none"/><path d="M330.2 356.9 Q338.7 358.2 349.2 356.6" fill="none" stroke="#33330a" stroke-width=".8"/><path d="M322.2 316.8 V356.6 M349.2 316.8 V356.6" fill="none" stroke="#33330a" stroke-width=".7"/><path d="M349.2 347.1 c3 1.500 3.500 6 .5 8.500" fill="#9aa3ab" stroke="#23272b" stroke-width=".8"/><ellipse cx="335.7" cy="316.8" rx="13.5" ry="6.0" fill="#ffff00" stroke="#1a1a05" stroke-width=".9"/>
<path d="M400.3 278.6 V318.3 Q413.6 319.8 427.0 318.3 V278.6 Z" fill="url(#gY)" stroke="none"/><path d="M408.3 318.6 Q416.6 319.9 427.0 318.3" fill="none" stroke="#33330a" stroke-width=".8"/><path d="M400.3 278.6 V318.3 M427.0 278.6 V318.3" fill="none" stroke="#33330a" stroke-width=".7"/><path d="M427.0 308.8 c3 1.500 3.500 6 .5 8.500" fill="#9aa3ab" stroke="#23272b" stroke-width=".8"/><ellipse cx="413.6" cy="278.6" rx="13.3" ry="6.0" fill="#ffff00" stroke="#1a1a05" stroke-width=".9"/>
<ellipse cx="474.3" cy="520.5" rx="16.1" ry="7.0" fill="#3b4046" stroke="#23272b" stroke-width=".7"/><path d="M460.2 377.0 V520.5 A14.1 6.0 0 0 0 488.4 520.5 V377.0 Z" fill="url(#gY)" stroke="#33330a" stroke-width=".7"/><ellipse cx="474.3" cy="377.0" rx="14.1" ry="6.0" fill="#ffff00" stroke="#1a1a05" stroke-width=".9"/>
<ellipse cx="551.2" cy="483.5" rx="15.4" ry="7.0" fill="#3b4046" stroke="#23272b" stroke-width=".7"/><path d="M537.7 338.6 V483.5 A13.4 6.0 0 0 0 564.6 483.5 V338.6 Z" fill="url(#gY)" stroke="#33330a" stroke-width=".7"/><ellipse cx="551.2" cy="338.6" rx="13.4" ry="6.0" fill="#ffff00" stroke="#1a1a05" stroke-width=".9"/>
<path d="M446.400 411.600 L445 398.500" stroke="#18c018" stroke-width="1.100"/><path d="M446.400 411.600 L456.500 406.500" stroke="#e02020" stroke-width="1.100"/><path d="M446.400 411.600 L456.500 416.500" stroke="#18d8e8" stroke-width="1.100"/><circle cx="445" cy="398" r="2.400" fill="#18d018"/><circle cx="456.800" cy="406.300" r="2" fill="#e02020"/><circle cx="456.800" cy="416.800" r="2.600" fill="#18d8f0"/>
</svg>

<div class="ptab act" style="left:7px;width:29px"></div>
<div class="ptab" style="left:35px;width:31px"></div>
<div class="ptab" style="left:65px;width:31px"></div>
<div id="lp"></div>
<div class="abs" style="left:27px;top:212px;font-size:13px;font-weight:bold;color:#4a4a4a;line-height:16px;letter-spacing:-.3px;white-space:nowrap">模型树</div>
<div class="abs" style="left:7px;top:234px;width:91px;height:27px;border:1px solid #d0d3d7;background:#f9fafb"></div>
<div class="abs" style="left:15px;top:237px;width:56px;height:15px;background:#fff"></div>
<div id="tree">
</div>
<div class="ti" style="left:30px;top:265px"><span style="display:inline-block;transform:scaleX(0.951);transform-origin:0 50%">ASM0002.ASM</span></div>
<div class="ti" style="left:50px;top:285px"><span style="display:inline-block;transform:scaleX(0.847);transform-origin:0 50%">1.PRT</span></div>
<div class="ti" style="left:50px;top:305px"><span style="display:inline-block;transform:scaleX(0.842);transform-origin:0 50%">TEST.PRT</span></div>
<div class="ti" style="left:50px;top:325px"><span style="display:inline-block;transform:scaleX(0.919);transform-origin:0 50%">阵列 1 / LOCAL_GROUP</span></div>
<div class="ti" style="left:50px;top:345px"><span style="display:inline-block;transform:scaleX(0.842);transform-origin:0 50%">TEST.PRT</span></div>
<div class="ti" style="left:50px;top:365px;width:143px;overflow:hidden"><span style="display:inline-block;transform:scaleX(0.921);transform-origin:0 50%">阵列 2 / LOCAL_GROUP_3</span></div>
<div class="ti" style="left:50px;top:385px"><span style="display:inline-block;transform:scaleX(0.878);transform-origin:0 50%">TEST-3.PRT</span></div>
<div class="ti" style="left:50px;top:405px"><span style="display:inline-block;transform:scaleX(0.878);transform-origin:0 50%">TEST-1.PRT</span></div>
<div class="ti" style="left:50px;top:425px;width:143px;overflow:hidden"><span style="display:inline-block;transform:scaleX(0.921);transform-origin:0 50%">阵列 3 / LOCAL_GROUP_6</span></div>
<div class="ti" style="left:50px;top:445px"><span style="display:inline-block;transform:scaleX(0.929);transform-origin:0 50%">阵列 4 / TEST-2.PRT</span></div>
<!-- scrollbar -->
<div class="abs" style="left:9px;top:662px;width:184px;height:17px;background:linear-gradient(#f4f4f5,#e2e3e5);border-top:1px solid #d5d6d8"></div>
<div class="abs" style="left:25px;top:663px;width:145px;height:15px;background:linear-gradient(#fafafa,#ededee 50%,#e3e4e6);border:1px solid #d0d1d3;border-radius:2px"></div>
<svg class="abs" style="left:0;top:165px;z-index:3" width="201" height="528" viewBox="0 165 201 528">
<defs>
<g id="prt"><path d="M0 2.500 l2 -2.300 h11 v9.500 l-2 2.300 h-11z" fill="#1e7f86" stroke="#444" stroke-width=".7"/><path d="M0 2.500 l2 -2.300 h11 l-2 2.300z" fill="#dffcfd" stroke="#555" stroke-width=".5"/><rect x="0" y="2.500" width="11" height="9.500" fill="#8ff6f8" stroke="#555" stroke-width=".8"/></g>
<g id="pat"><path d="M0 3 l2 -2.500 h11.500 v10.500 l-2 2.500 h-11.500z" fill="#c77be8" stroke="#666" stroke-width=".7"/><path d="M0 3 l2 -2.500 h11.500 l-2 2.500z" fill="#f0d8fa" stroke="#666" stroke-width=".5"/><rect x="0" y="3" width="11.500" height="10.500" fill="#fff" stroke="#555" stroke-width=".9"/><g fill="#9b1fd0"><rect x="3" y="5.500" width="1.600" height="1.600"/><rect x="7" y="5.500" width="1.600" height="1.600"/><rect x="3" y="9.500" width="1.600" height="1.600"/><rect x="7" y="9.500" width="1.600" height="1.600"/></g></g>
<path id="exp" d="M0 0 l6.500 4.500 l-6.500 4.500z" fill="#8c8c8c"/>
</defs>
<!-- panel tab icons -->
<g fill="#fff" stroke="#333" stroke-width="1"><rect x="15.500" y="182" width="4" height="4"/><rect x="15.500" y="188.500" width="4" height="4"/><rect x="15.500" y="195" width="4" height="4"/><rect x="23.500" y="188.500" width="4" height="4"/></g><path d="M17.500 186 v2.500 M17.500 192.500 v2.500 M19.500 190.500 h4" stroke="#333" stroke-width="1"/>
<g stroke="#6b5b12" stroke-width=".8" fill="#f5e84a"><path d="M42.500 191 v-8 l1.500 -1.300 h4 l1.500 1.500 h4.500 v7.800z"/><path d="M45.500 195 v-8 l1.500 -1.300 h4 l1.500 1.500 h4.500 v7.800z"/><path d="M48.500 199.500 v-8.500 l1.500 -1.300 h4 l1.500 1.500 h4.500 v8.300z"/></g><rect x="49.500" y="193.500" width="9.500" height="5" fill="#fbf7b5"/>
<path d="M72.500 198.500 v-12.500 l1.500 -1.500 h5 l1.500 1.700 h8.500 v12.300z" fill="#f5e84a" stroke="#6b5b12" stroke-width=".9"/><rect x="73.500" y="188" width="14.500" height="9.500" fill="#fbf48a"/><g stroke="#1a2fd0" stroke-width="1.100"><path d="M81 189 v7 M77.500 192.500 h7 M78.500 190 l5 5 M83.500 190 l-5 5"/></g>
<!-- tools icon -->
<path d="M116 216 c1 -3.500 6 -4 9 -2.500 l1.500 2 h-3 v2.500 h-5 v-2.500z" fill="#eee" stroke="#777" stroke-width=".8"/><rect x="119.500" y="218" width="3.600" height="11" rx="1" fill="#e8601a" stroke="#8a3a10" stroke-width=".6"/><rect x="120.300" y="218.500" width="1.200" height="10" fill="#f8d070"/>
<path d="M126 213 c-1 -2 1 -3.500 2.500 -3.200 v2.200 h2.500 v-2.200 c2 .3 3 2.200 2 3.700 l-1.500 1.500 v3 h-4 v-3z" fill="#ddd" stroke="#666" stroke-width=".8"/><rect x="127.300" y="218" width="4" height="10" rx="1" fill="#2a6fe0" stroke="#1a3f90" stroke-width=".6"/><rect x="128" y="218.500" width="1.200" height="9" fill="#8fc0ff"/>
<path d="M141.700 217 h6.400 l-3.200 3.900z" fill="#444"/>
<path d="M158.500 210.500 h11 l4.500 4.500 v13.500 h-15.500z" fill="#f7f7f1" stroke="#555" stroke-width="1"/><path d="M169.500 210.500 v4.500 h4.500" fill="none" stroke="#555" stroke-width=".8"/><g fill="none" stroke="#333" stroke-width=".9"><circle cx="161.800" cy="214.800" r="1.100"/><circle cx="161.800" cy="219.500" r="1.100"/><circle cx="161.800" cy="224.500" r="1.100"/><path d="M164.500 214.800 h3.500 M164.500 219.500 h7 M164.500 224.500 h7"/></g>
<path d="M183.700 217 h6.400 l-3.200 3.900z" fill="#444"/>
<!-- search row -->
<path d="M78.500 241.300 l7 7 M85.500 241.300 l-7 7" stroke="#8a8a8a" stroke-width="1.100"/>
<path d="M104.800 245 h6.400 l-3.200 4z" fill="#444"/>
<g><rect x="122" y="244" width="6" height="10.500" rx="1" fill="#555" stroke="#111" stroke-width=".8"/><rect x="132" y="244" width="6" height="10.500" rx="1" fill="#555" stroke="#111" stroke-width=".8"/><rect x="123.300" y="240" width="3.400" height="5" fill="#333"/><rect x="133.300" y="240" width="3.400" height="5" fill="#333"/><rect x="127.500" y="245" width="5" height="4" fill="#222"/><rect x="123" y="249.500" width="1.600" height="4.500" fill="#ddd"/><rect x="133" y="249.500" width="1.600" height="4.500" fill="#ddd"/><rect x="122" y="252" width="6" height="1" fill="#bbb"/><rect x="132" y="252" width="6" height="1" fill="#bbb"/></g>
<path d="M148.500 241.500 h15 l-6 6.500 v6 h-3 v-6z" fill="#f4f4f4" stroke="#c4c4c4" stroke-width="1"/>
<path d="M182.200 241.800 v10.500 M176.800 247 h11" stroke="#b0b0b0" stroke-width="2.600"/>
<!-- tree icons -->
<path d="M12.500 271 l2 -2 h11.500 v11.500 l-2 2 h-11.500z" fill="#e9b62a" stroke="#8a6a1a" stroke-width=".7"/><rect x="12.500" y="271" width="11.500" height="11.500" fill="#fbf08a" stroke="#8a6a1a" stroke-width=".8"/><rect x="16.500" y="270" width="8.500" height="8.500" fill="#8ff6f8" stroke="#4a8a8e" stroke-width=".7"/>
<use href="#prt" x="32.500" y="289.700"/><use href="#prt" x="32.500" y="309.700"/><use href="#prt" x="32.500" y="349.700"/><use href="#prt" x="32.500" y="389.700"/><use href="#prt" x="32.500" y="409.700"/>
<use href="#pat" x="32.500" y="329"/><use href="#pat" x="32.500" y="369"/><use href="#pat" x="32.500" y="429"/><use href="#pat" x="32.500" y="449"/>
<use href="#exp" x="17.500" y="331.500"/><use href="#exp" x="17.500" y="371.500"/><use href="#exp" x="17.500" y="431.500"/><use href="#exp" x="17.500" y="451.500"/>
<!-- scrollbar arrows -->
<path d="M19.500 666.500 v8 l-5 -4z M180.500 666.500 v8 l5 -4z" fill="#555"/>
<path d="M93.500 667.500 v6.500 M96 667.500 v6.500 M98.500 667.500 v6.500 M101 667.500 v6.500" stroke="#b9bcc2" stroke-width="1"/>
</svg>


<style>
#dlg{position:absolute;left:783px;top:248px;width:267px;height:383px;background:#f4f5f7;border:4px solid #bfc4cb;border-top-width:4px;box-shadow:inset 0 0 0 1px #dfe2e6}
#dlg .tb{position:absolute;left:0;top:0;width:259px;height:19px;background:linear-gradient(#fdfdfd,#e6e8eb);border-bottom:1px solid #d4d7db}
.dt{position:absolute;font-weight:bold;font-size:13px;line-height:16px;color:#555;white-space:nowrap;letter-spacing:-.3px}
.trow{position:absolute;left:787px;width:259px;background:#eff0f3;border-top:1px solid #d7dade;overflow:hidden}
.vsep{position:absolute;width:1px;background:#d3d6da}
.btn{position:absolute;border:1px solid #c3c6ca;border-radius:3px;background:linear-gradient(#fbfbfc,#e9eaed);box-shadow:0 1px 0 #dcdee1}
.red{position:absolute;border:3px solid #e81c24;border-radius:2px;z-index:6}
</style>
<div id="dlg"><div class="tb"></div></div>
<div class="dt" style="left:874px;top:253px;color:#4a4a4a">视图管理器</div>
<svg class="abs" style="left:1030px;top:256px" width="11" height="10"><path d="M1.500 1.500 l7 7 M8.500 1.500 l-7 7" stroke="#555" stroke-width="2.200"/></svg>
<!-- tab row 1 -->
<div class="trow" style="top:274px;height:19px"></div>
<div class="dt" style="left:812px;top:277px">简化表示</div>
<div class="dt" style="left:915px;top:277px">样式</div>
<div class="dt" style="left:993px;top:277px">截面</div>
<div class="vsep" style="left:889px;top:275px;height:17px"></div><div class="vsep" style="left:966px;top:275px;height:17px"></div>
<!-- tab row 2 -->
<div class="trow" style="top:292px;height:19px;border-bottom:1px solid #d7dade"></div>
<div class="dt" style="left:808px;top:294px">层</div>
<div class="dt" style="left:931px;top:294px">定向</div>
<div class="dt" style="left:999px;top:294px">全部</div>
<div class="vsep" style="left:842px;top:293px;height:17px"></div><div class="vsep" style="left:977px;top:293px;height:17px"></div>
<div class="abs" style="left:847px;top:288px;width:61px;height:26px;background:#fff;z-index:5"></div>
<div class="dt" style="left:863.500px;top:294px;color:#111;z-index:7">分解</div>
<div class="red" style="left:846.500px;top:287.800px;width:61px;height:26.200px"></div>
<!-- buttons -->
<div class="btn" style="left:792px;top:319px;width:46px;height:27px;background:#f0f1f3;border-color:#d6d8db"></div>
<div class="dt" style="left:802px;top:325px;color:#a0a0a0">新建</div>
<div class="red" style="left:786.500px;top:314px;width:56px;height:35px"></div>
<div class="btn" style="left:875px;top:319px;width:60px;height:28px"></div>
<div class="dt" style="left:884.500px;top:325px;color:#111">编辑</div>
<div class="dd" style="left:925px;top:330px;border-top-color:#333"></div>
<div class="btn" style="left:939px;top:319px;width:84px;height:28px"></div>
<svg class="abs" style="left:950px;top:327px" width="18" height="12" viewBox="0 0 18 12"><path d="M1 6 C4 1.500 13 1.500 16.500 6 C13 10.500 4 10.500 1 6Z" fill="#fff" stroke="#333" stroke-width=".9"/><circle cx="8.700" cy="6" r="3.300" fill="#0e8f8a"/><path d="M6 4 l5.500 4" stroke="#3b2a2a" stroke-width="1.500"/></svg>
<div class="dt" style="left:973px;top:325px;color:#111">选项</div>
<div class="dd" style="left:1013px;top:330px;border-top-color:#333"></div>
<!-- list -->
<div class="abs" style="left:791px;top:355px;width:251px;height:241px;background:#fff;border:1px solid #a9adb3"></div>
<div class="abs" style="left:792px;top:356px;width:249px;height:18px;background:linear-gradient(#f8f8f9,#e9ebee);border-bottom:1px solid #d7dade"></div>
<div class="vsep" style="left:928px;top:356px;height:18px"></div>
<div class="dt" style="left:800px;top:359px;color:#333">名称</div>
<div class="abs" style="left:793px;top:376px;width:136px;height:20px;background:#fff;border:1px solid #a3a3a3;z-index:5"></div>
<div class="abs" style="left:797px;top:380px;font-family:'Liberation Mono',monospace;font-size:11px;letter-spacing:-.6px;line-height:14px;color:#5d6770;z-index:6;white-space:nowrap">explode_view</div>
<div class="red" style="left:789.700px;top:368.600px;width:144.700px;height:32px;border-width:3.300px"></div>
<svg class="abs" style="left:798px;top:402px" width="12" height="12" viewBox="0 0 12 12"><path d="M0.500 4.300 h5 v-3.300 l5.500 5 l-5.500 5 v-3.300 h-5z" fill="#d31111"/><path d="M0.500 6 h10 l-5 4.800 v-3.100 h-5z" fill="#7a0b0b"/></svg>
<div class="abs" style="left:811.500px;top:402px;font-size:12px;line-height:12px;color:#111;font-weight:400;white-space:nowrap;letter-spacing:0">默认分解</div>
<!-- bottom buttons -->
<div class="btn" style="left:792px;top:605.500px;width:60px;height:20px"></div>
<div class="dt" style="left:802px;top:607.500px;color:#222;font-size:12.500px">属性&gt;&gt;</div>
<div class="btn" style="left:995px;top:605.500px;width:46px;height:20px"></div>
<div class="dt" style="left:1005px;top:607.500px;color:#222;font-size:12.500px">关闭</div>
<div class="red" style="left:989.600px;top:600.300px;width:55.700px;height:28.300px"></div>


<svg class="abs" style="left:0;top:0;z-index:8;pointer-events:none" width="1136" height="733" viewBox="0 0 1136 733">
<g stroke="#e81c24" fill="#e81c24">
<path d="M674.500 154.500 L776 244.200" stroke-width="3" fill="none"/><path d="M786.500 253.500 L767.500 247.500 L783.500 233.800Z" stroke="none"/>
<path d="M879.300 408.500 V468" stroke-width="3" fill="none"/><path d="M871.500 467 H887.500 L879.500 485Z" stroke="none"/>
<path d="M884.500 528.500 L975 596.500" stroke-width="2.800" fill="none"/><path d="M986.500 605 L966.500 600.800 L978.200 588.200Z" stroke="none"/>
</g>
</svg>
<div class="abs" style="left:799px;top:489px;z-index:8;font-family:'Noto Serif CJK SC','Liberation Serif',serif;font-weight:900;font-size:28.5px;line-height:36px;letter-spacing:4.5px;color:#ea1450;white-space:nowrap">按中键确定</div>


<div id="status"></div>
<!-- viewport toolbar -->
<div class="abs" style="left:522.500px;top:169.500px;width:284px;height:28px;background:#f5f6f7;border:1px solid #c9ccd0;border-left:5px solid #d9dbde"></div>
<div class="abs" style="left:775.500px;top:172px;width:24px;height:23.500px;background:#dfe1e4;border:1px solid #aeb2b7"></div>
<svg class="abs" style="left:516px;top:164px;z-index:2" width="300" height="40" viewBox="516 164 300 40">
<g stroke="#d0d3d7" stroke-width="1"><path d="M555 171 v25 M582 171 v25 M609 171 v25 M636 171 v25 M664 171 v25 M691.500 171 v25 M719 171 v25 M746.500 171 v25 M774 171 v25"/></g>
<rect x="533.500" y="177" width="13.500" height="12.500" fill="#fff" stroke="#1a3a9a" stroke-width="1.300"/><circle cx="539.300" cy="182.300" r="3.800" fill="#eef4fa" stroke="#444" stroke-width="1.100"/><path d="M542 185.300 l4.500 4.500" stroke="#8a4a1a" stroke-width="1.800"/>
<circle cx="566.700" cy="181.800" r="5.500" fill="#f4f7fa" stroke="#555" stroke-width="1.200"/><path d="M563.700 181.800 h6 M566.700 178.800 v6" stroke="#111" stroke-width="1.500"/><path d="M570.800 186 l5.200 5.300" stroke="#8a4a1a" stroke-width="2"/>
<circle cx="593.500" cy="181.800" r="5.500" fill="#f4f7fa" stroke="#555" stroke-width="1.200"/><path d="M590.500 181.800 h6" stroke="#111" stroke-width="1.500"/><path d="M597.600 186 l5.200 5.300" stroke="#8a4a1a" stroke-width="2"/>
<rect x="615.500" y="177.500" width="13.500" height="14" fill="#7fb2ee" stroke="#1a3a9a" stroke-width="1.200"/><path d="M618 191 c4 -1 8 -5 10.500 -12.500 v12.500z" fill="#e9f2fd"/><path d="M619 190.500 c4 -1.500 7.500 -5 9.500 -11" stroke="#1a3a9a" stroke-width="1" fill="none"/>
<path d="M642.500 181 l3.500 -3.500 h9.500 v9.500 l-3.500 3.500 h-9.500z" fill="#35c9d0" stroke="#111" stroke-width="1"/><path d="M642.500 181 l3.500 -3.500 h9.500 l-3.500 3.500z" fill="#a6f4f6" stroke="#111" stroke-width=".8"/><rect x="642.500" y="181" width="9.500" height="9.500" fill="#fff" stroke="#111" stroke-width="1.100"/>
<path d="M660 194.500 h3 v-3z" fill="#555"/>
<path d="M670 189.500 v-7.500 l3 -3 M670 189.500 h10 l3.500 -3.500" fill="none" stroke="#6a6a6a" stroke-width="1"/><path d="M670 182 l3 -3 h3" fill="none" stroke="#35a9b2" stroke-width="1"/><path d="M680 189.500 l3.500 -3.500" stroke="#178c95" stroke-width="2"/><text x="675.500" y="184.500" font-size="8.500" font-family="Liberation Sans, sans-serif" fill="#111" textLength="9" lengthAdjust="spacingAndGlyphs">AB</text>
<path d="M687.500 194.500 h3 v-3z" fill="#555"/>
<g fill="none" stroke="#c3c3c3" stroke-width="1.100"><rect x="698" y="177.500" width="9" height="10"/><rect x="701.500" y="181" width="9" height="10" fill="#ededed"/><circle cx="706" cy="187" r="2"/></g>
<g stroke="#9a4d1f" stroke-width="1.200"><path d="M723.500 176.500 l4 4 m0 -4 l-4 4 M726 186.500 l4 4 m0 -4 l-4 4 M731 182 l7.500 8.500 m0 -8.500 l-7.500 8.500"/><path d="M735 176 l-2.500 5" stroke-dasharray="2 1.200"/></g><path d="M741.500 194.500 h3 v-3z" fill="#555"/>
<rect x="752.500" y="176.500" width="8" height="4" fill="#f3e35a" stroke="#6b5b12" stroke-width=".8"/><path d="M760.500 179 h5 l-5 6 h5" fill="none" stroke="#222" stroke-width=".9"/><ellipse cx="763" cy="189" rx="4.500" ry="2.300" fill="#ddd" stroke="#555" stroke-width=".8"/><circle cx="763" cy="189" r="1.300" fill="#1c6fb0"/>
<path d="M781.500 178 L787 183.500 L781.500 189.500 M787 183.500 H792.500" fill="none" stroke="#222" stroke-width="1.200"/><circle cx="781.500" cy="177.800" r="2.500" fill="#19c23a" stroke="#0a6a1a" stroke-width=".6"/><circle cx="781.500" cy="189.600" r="2.500" fill="#19d3ea" stroke="#0a6a7a" stroke-width=".6"/><circle cx="792.600" cy="183.400" r="2.500" fill="#e21a1a" stroke="#7a0a0a" stroke-width=".6"/>
</svg>

<!-- status bar contents -->
<div class="abs" style="left:8px;top:705px;width:22px;height:22px;background:#e4e6e9;border:1px solid #b9bcc1;border-bottom-color:#d5d7da;border-right-color:#d5d7da"></div>
<div class="abs" style="left:34px;top:705px;width:22px;height:22px;background:#e9ebee;border:1px solid #d0d3d7"></div>
<div class="abs" style="left:66px;top:704px;width:1px;height:23px;background:#d3d6da"></div>
<div class="abs" style="left:83px;top:703.2px;font-size:11px;line-height:15px;color:#333;font-weight:400;white-space:nowrap;letter-spacing:-.1px">新名称有非法字符。</div>
<div class="abs" style="left:722px;top:698px;width:1px;height:29px;background:#d3d6da"></div>
<div class="abs" style="left:753px;top:698px;width:1px;height:29px;background:#d3d6da"></div>
<div class="abs" style="left:799px;top:698px;width:1px;height:29px;background:#d3d6da"></div>
<div class="btn" style="left:757.500px;top:699px;width:39px;height:27px"></div>
<div class="btn" style="left:803.500px;top:699px;width:39px;height:27px"></div>
<div class="abs" style="left:938.500px;top:703px;width:179px;height:18px;background:#fff;border:1px solid #b5b9bf"></div>
<div class="abs" style="left:1102px;top:704px;width:14.500px;height:16px;background:#f3f4f6;border-left:1px solid #d0d3d7"></div>
<div class="abs" style="left:945px;top:704px;font-size:12.5px;line-height:16px;color:#222;font-weight:400">智能</div>
<svg class="abs" style="left:0;top:693px;z-index:3" width="1136" height="40" viewBox="0 693 1136 40">
<g fill="#fff" stroke="#1a2f9a" stroke-width="1"><rect x="15" y="708" width="3.500" height="3.500"/><rect x="15" y="714" width="3.500" height="3.500"/><rect x="15" y="720" width="3.500" height="3.500"/><rect x="22.500" y="714" width="3.500" height="3.500"/></g><path d="M16.700 711.500 v2.500 M16.700 717.500 v2.500 M18.500 715.700 h4" stroke="#1a2f9a" stroke-width="1"/>
<circle cx="45" cy="716" r="7" fill="#3bb34a"/><path d="M39.500 713 c3 -3 8 -3 10.500 -1 c-2 2 -3 5 -2 9 c-3 1 -7 0 -9 -3z" fill="#2a7fd0"/><ellipse cx="45" cy="716" rx="10" ry="3.600" transform="rotate(-32 45 716)" fill="none" stroke="#f3b71a" stroke-width="1.800"/>
<rect x="70.300" y="704.300" width="11.700" height="11.400" fill="#f6ea00" stroke="#111" stroke-width=".9"/><path d="M70.700 704.700 h6.500 l-4 5.300 l4 5.300 h-6.500z" fill="#00e5f5"/><path d="M78.500 705 l-4.500 5 l4.500 5" fill="none" stroke="#111" stroke-width="2.200"/><path d="M78.500 705.300 l-4.200 4.700 l4.200 4.700" fill="none" stroke="#fff" stroke-width=".8"/>
<circle cx="730.700" cy="713" r="5.300" fill="#3fd13f"/><circle cx="742" cy="713" r="2.800" fill="#d3d5d8"/><circle cx="749" cy="713" r="2.800" fill="#d3d5d8"/>
<g><rect x="769.500" y="710" width="5.500" height="9.500" rx="1" fill="#444" stroke="#111" stroke-width=".8"/><rect x="779" y="710" width="5.500" height="9.500" rx="1" fill="#444" stroke="#111" stroke-width=".8"/><rect x="770.700" y="706" width="3.200" height="5" fill="#222"/><rect x="780.200" y="706" width="3.200" height="5" fill="#222"/><rect x="774.500" y="711" width="5" height="4" fill="#222"/><rect x="770.500" y="714.500" width="1.500" height="4.500" fill="#ddd"/><rect x="780" y="714.500" width="1.500" height="4.500" fill="#ddd"/></g>
<path d="M816 710 l4 -4 h11 v10 l-4 4 h-11z" fill="#fdfbe8" stroke="#111" stroke-width="1"/><path d="M816 710 h11 v10 M827 710 l4 -4" fill="none" stroke="#111" stroke-width="1"/><rect x="818.500" y="712.500" width="5" height="5" fill="#19d3ea"/><rect x="820" y="714" width="2.200" height="2.200" fill="#f6ea2a"/>
<path d="M1105.500 711 h7.500 l-3.750 5z" fill="#6a6a6a"/>
<path d="M12 733 c5 -4 18 -4 24 0" fill="none" stroke="#2a5a8a" stroke-width="1"/>
</svg>
<!-- watermark -->
<div class="abs" style="left:925px;top:666.5px;width:206px;height:61.5px;background:rgba(255,255,255,.36);z-index:9"></div>
<svg class="abs" style="left:925px;top:660px;z-index:10" width="211" height="73" viewBox="925 660 211 73">
<ellipse cx="947" cy="685.500" rx="21" ry="12.500" transform="rotate(34 947 685.500)" fill="none" stroke="rgba(125,145,158,.62)" stroke-width="2.600"/>
<ellipse cx="969" cy="705" rx="12" ry="19.500" transform="rotate(18 969 705)" fill="none" stroke="rgba(225,115,115,.6)" stroke-width="2.600"/>
<ellipse cx="947" cy="701" rx="7" ry="4" transform="rotate(-20 947 701)" fill="none" stroke="rgba(170,200,215,.55)" stroke-width="1.500"/>
<text x="995.500" y="697" font-size="27" font-weight="900" font-family="'Noto Sans CJK SC','Liberation Sans',sans-serif" fill="rgba(95,190,130,.7)" textLength="116.500" lengthAdjust="spacing">野火论坛</text>
<text x="982.500" y="720.500" font-size="18" font-family="'Liberation Sans',sans-serif" fill="rgba(150,210,210,.6)" textLength="144" lengthAdjust="spacingAndGlyphs">www.proewildfire.cn</text>
</svg>

</body>
</html>
